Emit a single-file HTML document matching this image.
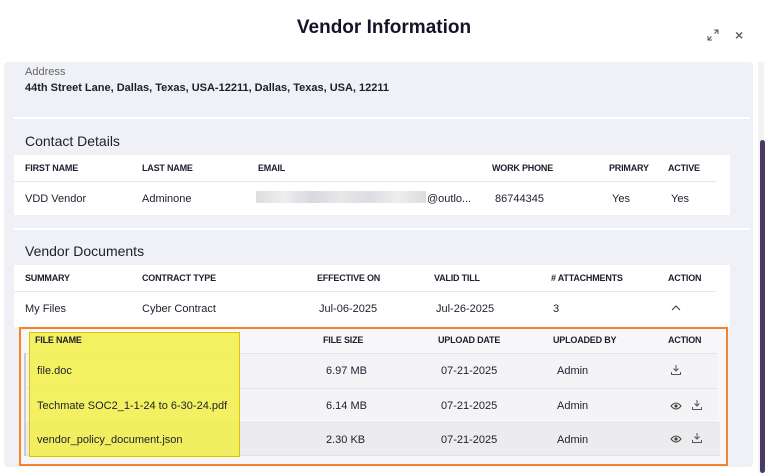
<!DOCTYPE html>
<html><head><style>
*{margin:0;padding:0;box-sizing:border-box}
body{width:768px;height:473px;background:#fff;font-family:"Liberation Sans",sans-serif;color:#1e1e2d;position:relative;overflow:hidden}
.a{position:absolute;white-space:nowrap}
.h{font-size:9px;font-weight:bold;letter-spacing:-0.2px}
.t{font-size:11px}
</style></head><body>
<div class="a" style="left:0;width:768px;top:17px;text-align:center;font-size:19px;font-weight:bold;color:#141428">Vendor Information</div>
<svg class="a" style="left:706px;top:28px" width="14" height="14" viewBox="0 0 14 14"><path d="M8 2h4v4M12 2L8.5 5.5M6 12H2V8M2 12l3.5-3.5" stroke="#555" stroke-width="1" fill="none"/></svg>
<div class="a" style="left:735px;top:27px;font-size:14px;font-weight:bold;color:#666">×</div>
<div class="a" style="left:4px;top:62px;width:749px;height:405px;background:#f0f1f6;border-radius:4px"></div>
<div class="a" style="left:758px;top:62px;width:6px;height:411px;background:#f3f3f3"></div>
<div class="a" style="left:760px;top:140px;width:5px;height:333px;background:#4b3a66;border-radius:3px"></div>
<div class="a" style="left:25px;top:66px;font-size:11px;color:#666">Address</div>
<div class="a" style="left:25px;top:82px;font-size:11px;font-weight:bold">44th Street Lane, Dallas, Texas, USA-12211, Dallas, Texas, USA, 12211</div>
<div class="a" style="left:14px;top:117px;width:736px;height:2px;background:#fff"></div>
<div class="a" style="left:25px;top:133px;font-size:14px">Contact Details</div>
<div class="a" style="left:14px;top:155px;width:716px;height:60px;background:#fff"></div>
<div class="a" style="left:14px;top:181px;width:702px;height:1px;background:#e6e7ee"></div>
<div class="a h" style="left:25px;top:163px">FIRST NAME</div>
<div class="a h" style="left:142px;top:163px">LAST NAME</div>
<div class="a h" style="left:258px;top:163px">EMAIL</div>
<div class="a h" style="left:492px;top:163px">WORK PHONE</div>
<div class="a h" style="left:609px;top:163px">PRIMARY</div>
<div class="a h" style="left:668px;top:163px">ACTIVE</div>
<div class="a t" style="left:25px;top:193px">VDD Vendor</div>
<div class="a t" style="left:142px;top:193px">Adminone</div>
<div class="a" style="left:256px;top:191px;width:170px;height:12px;background:linear-gradient(90deg,#ddd,#eee,#d8d8e0,#e8e8e8,#dcdce4,#eee,#ddd)"></div>
<div class="a t" style="left:427px;top:193px">@outlo...</div>
<div class="a t" style="left:495px;top:193px">86744345</div>
<div class="a t" style="left:612px;top:193px">Yes</div>
<div class="a t" style="left:671px;top:193px">Yes</div>
<div class="a" style="left:14px;top:228px;width:736px;height:2px;background:#fff"></div>
<div class="a" style="left:25px;top:243px;font-size:14px">Vendor Documents</div>
<div class="a" style="left:14px;top:265px;width:716px;height:62px;background:#fff"></div>
<div class="a" style="left:14px;top:291px;width:702px;height:1px;background:#e6e7ee"></div>
<div class="a h" style="left:25px;top:273px">SUMMARY</div>
<div class="a h" style="left:142px;top:273px">CONTRACT TYPE</div>
<div class="a h" style="left:317px;top:273px">EFFECTIVE ON</div>
<div class="a h" style="left:434px;top:273px">VALID TILL</div>
<div class="a h" style="left:551px;top:273px">&#35; ATTACHMENTS</div>
<div class="a h" style="left:668px;top:273px">ACTION</div>
<div class="a t" style="left:25px;top:303px">My Files</div>
<div class="a t" style="left:142px;top:303px">Cyber Contract</div>
<div class="a t" style="left:319px;top:303px">Jul-06-2025</div>
<div class="a t" style="left:436px;top:303px">Jul-26-2025</div>
<div class="a t" style="left:553px;top:303px">3</div>
<svg class="a" style="left:671px;top:305px" width="10" height="6"><path d="M1 5l4-4 4 4" stroke="#333" fill="none"/></svg>
<div class="a" style="left:19px;top:327px;width:709px;height:139px;border:2px solid #f5822a;background:#f7f7f9"></div>
<div class="a" style="left:24px;top:353px;width:693px;height:35px;background:#f4f4f6;border-top:1px solid #e4e4ea"></div>
<div class="a" style="left:24px;top:388px;width:693px;height:34px;background:#f4f4f6;border-top:1px solid #e4e4ea"></div>
<div class="a" style="left:24px;top:422px;width:696px;height:34px;background:#ececee;border-top:1px solid #e4e4ea;border-bottom:1px solid #e0e0e6"></div>
<div class="a" style="left:24px;top:353px;width:2px;height:103px;background:#ccc"></div>
<div class="a" style="left:29px;top:332px;width:211px;height:125px;background:rgba(242,240,70,0.85);border:1px solid #e0c000"></div>
<div class="a h" style="left:35px;top:335px">FILE NAME</div>
<div class="a h" style="left:323px;top:335px">FILE SIZE</div>
<div class="a h" style="left:438px;top:335px">UPLOAD DATE</div>
<div class="a h" style="left:553px;top:335px">UPLOADED BY</div>
<div class="a h" style="left:668px;top:335px">ACTION</div>
<div class="a t" style="left:37px;top:365px">file.doc</div>
<div class="a t" style="left:326px;top:365px">6.97 MB</div>
<div class="a t" style="left:441px;top:365px">07-21-2025</div>
<div class="a t" style="left:557px;top:365px">Admin</div>
<div class="a t" style="left:37px;top:400px">Techmate SOC2_1-1-24 to 6-30-24.pdf</div>
<div class="a t" style="left:326px;top:400px">6.14 MB</div>
<div class="a t" style="left:441px;top:400px">07-21-2025</div>
<div class="a t" style="left:557px;top:400px">Admin</div>
<div class="a t" style="left:37px;top:434px">vendor_policy_document.json</div>
<div class="a t" style="left:326px;top:434px">2.30 KB</div>
<div class="a t" style="left:441px;top:434px">07-21-2025</div>
<div class="a t" style="left:557px;top:434px">Admin</div>
<svg class="a" style="left:670px;top:364px" width="12" height="12"><path d="M6 1v6M3.5 4.5L6 7l2.5-2.5M1.5 8v2.5h9V8" stroke="#555" fill="none"/></svg>
<svg class="a" style="left:670px;top:400px" width="12" height="12"><path d="M1 6q5-6 10 0q-5 6-10 0z" stroke="#444" fill="none"/><circle cx="6" cy="6" r="1.6" fill="#444"/></svg>
<svg class="a" style="left:691px;top:399px" width="12" height="12"><path d="M6 1v6M3.5 4.5L6 7l2.5-2.5M1.5 8v2.5h9V8" stroke="#555" fill="none"/></svg>
<svg class="a" style="left:670px;top:433px" width="12" height="12"><path d="M1 6q5-6 10 0q-5 6-10 0z" stroke="#444" fill="none"/><circle cx="6" cy="6" r="1.6" fill="#444"/></svg>
<svg class="a" style="left:691px;top:432px" width="12" height="12"><path d="M6 1v6M3.5 4.5L6 7l2.5-2.5M1.5 8v2.5h9V8" stroke="#555" fill="none"/></svg>
</body></html>
